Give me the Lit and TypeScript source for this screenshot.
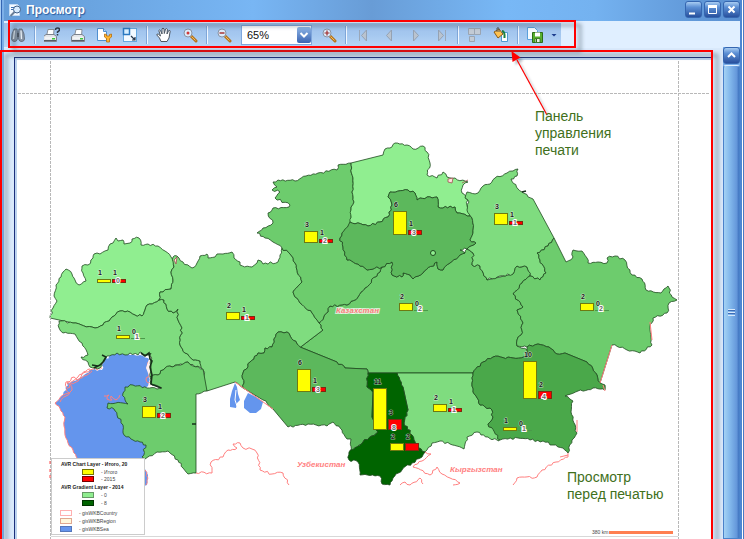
import { LitElement, css, html, svg, nothing } from "lit";
import { customElement } from "lit/decorators.js";

type Pt = [number, number];

// Parses "x,y x,y ..." and adds small deterministic kinks so borders look surveyed.
function border(points: string, closed = true): string {
  const pts = points.trim().split(/\s+/).map((p) => p.split(",").map(Number) as Pt);
  if (closed) pts.push(pts[0]);
  let d = `M${pts[0][0]} ${pts[0][1]}`;
  for (let i = 1; i < pts.length; i++) {
    const a = pts[i - 1];
    const b = pts[i];
    const flip = a[0] > b[0] || (a[0] === b[0] && a[1] > b[1]);
    const [s, e] = flip ? [b, a] : [a, b];
    const len = Math.hypot(e[0] - s[0], e[1] - s[1]);
    if (len > 4 && len < 22) {
      const n = Math.max(2, Math.round(len / 2.6));
      const mids: string[] = [];
      for (let k = 1; k < n; k++) {
        const h = Math.sin(s[0] * 12.9 + s[1] * 78.2 + e[0] * 37.7 + k * 51.3) * 43758.5;
        const off = (h - Math.floor(h) - 0.5) * 2.4;
        const x = s[0] + ((e[0] - s[0]) * k) / n - ((e[1] - s[1]) / len) * off;
        const y = s[1] + ((e[1] - s[1]) * k) / n + ((e[0] - s[0]) / len) * off;
        mids.push(`L${x.toFixed(1)} ${y.toFixed(1)}`);
      }
      d += (flip ? mids.reverse() : mids).join("");
    }
    d += `L${b[0]} ${b[1]}`;
  }
  return d + (closed ? "Z" : "");
}

const SHADES = ["#90ee90", "#7fdc7f", "#6dcc6d", "#5cb85c", "#4aa84a", "#006400"];

const SEA = "102,370 90,370 84,375 77,380 67,383 66,390 63,395 55,403 61,411 65,417 64,426 65,435 68,443 73,450 78,459 142,459 150,440 140,400 150,383 149,374 150,360 140,355 128,354 117,353 103,360";

const REGIONS: [number, string][] = [
  [2, "319,323 328,312 330,306 347,305 358,297 365,288 380,272 382,267 392,262 392,275 402,277 403,273 410,275 413,279 423,273 437,262 438,269 443,270 450,263 465,253 467,249 473,253 472,265 480,266 487,280 513,274 517,266 527,267 530,276 522,283 513,294 523,307 517,310 523,323 521,335 517,340 517,346 527,350 527,357 513,358 493,357 483,362 473,373 368,373 367,369 345,368 337,362 300,347 298,349 323,330"],
  [0, "50,318 53,308 57,301 54,296 56,285 61,277 63,272 66,269 72,274 75,280 79,285 86,281 83,273 82,266 88,265 93,258 94,254 100,254 108,250 110,244 113,243 116,238 118,241 123,240 124,244 130,243 132,239 139,238 141,245 148,244 158,246 165,251 171,257 173,260 174,267 171,272 173,280 171,289 160,292 159,300 147,305 145,310 142,316 135,315 130,312 120,311 112,317 103,325 95,328 92,327 73,323"],
  [1, "59,321 73,323 92,327 95,328 103,325 112,317 120,311 130,312 135,315 142,316 145,310 147,305 159,300 164,300 167,309 173,313 178,309 178,320 182,328 180,345 185,353 193,360 200,361 203,368 195,367 188,362 178,365 165,368 158,375 150,377 151,366 151,353 146,355 140,352 138,355 130,353 125,355 117,353 107,356 102,363 100,368 90,367 88,362 81,357 88,355 82,343 75,334 63,333 59,328"],
  [1, "173,257 177,256 183,262 192,268 197,263 200,256 207,254 208,258 215,257 217,254 223,254 232,252 234,258 240,262 240,265 252,267 257,263 258,260 263,264 278,262 280,255 282,248 290,254 295,263 302,282 293,292 300,303 312,313 319,323 323,330 298,349 297,344 287,332 278,332 272,347 265,348 264,353 258,353 250,362 243,373 243,388 235,382 207,391 203,370 200,361 193,360 185,353 180,345 182,328 178,320 178,309 173,313 167,309 164,300 159,300 160,292 171,289 173,280 171,272 174,267"],
  [2, "150,377 158,375 165,368 177,365 188,362 193,366 203,369 207,391 196,394 196,473 188,474 183,468 178,460 168,451 157,452 145,459 142,457 146,445 140,442 133,440 123,433 123,425 117,415 114,409 107,408 108,403 128,404 125,400 123,393 125,387 133,385 147,388 162,388 155,385 150,383"],
  [2, "351,163 338,165 337,170 318,173 306,176 295,181 278,180 273,182 277,187 272,190 280,192 275,198 290,205 289,207 273,208 268,213 273,223 263,228 257,233 265,238 273,242 282,248 290,254 295,263 302,282 293,292 300,303 312,313 319,323 328,312 330,306 347,305 358,297 365,288 380,272 382,267 367,270 358,264 347,260 343,247 340,238 350,223 351,210 354,202 352,192 353,178"],
  [0, "351,163 383,155 385,149 390,148 395,143 407,145 413,149 423,146 427,152 430,163 427,175 437,178 443,172 447,177 455,178 468,182 463,185 462,193 468,200 467,205 470,216 457,213 455,207 438,207 437,197 420,198 417,200 415,193 408,190 390,192 388,197 392,205 388,217 380,222 368,226 350,222 351,210 354,202 352,192 353,178"],
  [3, "350,222 368,226 380,222 388,217 392,205 388,197 390,192 408,190 415,193 417,200 420,198 437,197 438,207 455,207 457,213 470,216 472,218 473,233 470,240 476,243 467,249 460,250 465,253 450,263 443,270 438,269 437,262 423,273 413,279 410,275 403,273 402,277 392,275 392,262 382,267 367,270 358,264 347,260 343,247 340,238"],
  [1, "467,192 478,193 483,186 490,184 495,178 507,173 513,171 518,169 517,176 511,179 522,192 533,199 554,238 548,246 537,253 540,260 546,273 540,280 530,276 527,267 517,266 513,274 500,276 487,280 480,266 472,265 473,253 467,249 476,243 470,240 473,233 472,218 467,210 469,202 465,198"],
  [2, "554,238 566,262 573,257 573,250 582,251 587,258 588,263 598,262 607,263 607,258 615,256 625,260 632,275 642,279 646,290 661,293 668,286 672,297 677,300 669,303 667,313 653,318 650,327 652,345 640,353 627,350 612,345 600,383 597,375 587,362 565,353 557,354 549,347 538,344 527,347 517,346 517,340 521,335 523,323 517,310 523,307 513,294 522,283 530,276 540,280 546,273 540,260 537,253 548,246"],
  [3, "300,347 337,362 345,368 367,369 368,373 367,387 373,392 372,417 378,432 363,442 351,452 351,439 347,439 342,430 333,422 327,426 308,424 288,427 273,409 263,400 243,388 243,373 250,362 258,353 264,353 265,348 272,347 278,332 287,332 297,344"],
  [1, "397,373 473,373 472,383 473,392 480,405 492,410 493,417 488,424 500,438 499,441 488,437 477,432 467,437 464,449 450,444 440,441 432,443 425,452 415,445 412,435 404,423 408,410 403,387"],
  [5, "368,373 397,373 403,387 408,410 404,423 412,435 415,445 425,452 422,457 412,463 402,470 393,478 390,485 382,484 380,476 360,475 358,462 349,460 349,452 363,442 378,432 372,417 373,392 367,387"],
  [4, "473,373 483,362 493,357 513,358 527,357 527,350 527,347 538,344 549,347 557,354 565,353 587,362 597,375 600,383 605,385 605,390 593,388 578,391 565,396 573,401 571,412 577,433 572,440 568,453 563,448 553,445 543,441 530,440 518,438 500,440 488,424 493,417 492,410 480,405 473,392 472,383"],
];

const NEIGHBOURS = [
  "196,473 212,473 211,462 223,457 228,450 237,448 233,444 240,443 243,448 252,449 257,453 260,470 272,474 283,473 289,485",
  "425,452 431,454 422,461 413,467 430,475 437,467 442,474 450,478 460,483 453,485",
  "400,485 405,482 410,485 420,478 423,484",
  "513,485 517,478 537,477 542,470 556,462 568,457 568,453",
  "235,382 273,409",
];

const COAST = [
  "102,368 90,370 86,372 77,380 74,377 67,383 70,387 66,390 69,393 63,395 55,403 61,411 65,417 64,426 65,435 68,443 73,450 78,459",
  "92,371 84,376 76,382 70,384 72,390 66,396 60,402",
  "90,369 82,374 78,377 73,381 66,382 67,388",
  "104,396 109,395 107,399 112,400 111,396 116,400 120,395",
  "150,360 147,368 149,374 146,380 152,385",
  "145,470 148,478 146,485",
];

interface Chart { x: number; base: number; total: number; year: number; labels: [string, string, string]; }

const CHARTS: Chart[] = [
  { x: 97, base: 282, total: 3, year: 3, labels: ["1", "1", "0"] },
  { x: 116, base: 338, total: 3, year: 0, labels: ["1", "0", "1"] },
  { x: 226, base: 319, total: 7, year: 3, labels: ["2", "1", "1"] },
  { x: 142, base: 417, total: 11, year: 4, labels: ["3", "1", "2"] },
  { x: 304, base: 242, total: 11, year: 3, labels: ["3", "1", "2"] },
  { x: 393, base: 234, total: 23, year: 4, labels: ["6", "1", "3"] },
  { x: 494, base: 224, total: 11, year: 3, labels: ["3", "1", "1"] },
  { x: 399, base: 310, total: 7, year: 0, labels: ["2", "0", "2"] },
  { x: 580, base: 310, total: 7, year: 0, labels: ["2", "0", "2"] },
  { x: 297, base: 391, total: 22, year: 4, labels: ["6", "1", "3"] },
  { x: 373, base: 429, total: 41, year: 10, labels: ["11", "3", "8"] },
  { x: 390, base: 450, total: 7, year: 7, labels: ["2", "2", ""] },
  { x: 433, base: 411, total: 7, year: 3, labels: ["2", "1", "1"] },
  { x: 523, base: 398, total: 37, year: 7, labels: ["10", "2", "4"] },
  { x: 503, base: 430, total: 3, year: 0, labels: ["1", "0", "1"] },
];

const LEGEND: { y: number; x: number; swatch: string; edge: string; label: string; lx: number }[] = [
  { y: 469, x: 82, swatch: "#ffff00", edge: "#777700", label: "- Итого", lx: 101 },
  { y: 476, x: 82, swatch: "#ff0000", edge: "#770000", label: "- 2015", lx: 101 },
  { y: 492, x: 82, swatch: "#90ee90", edge: "#669966", label: "- 0", lx: 101 },
  { y: 500, x: 82, swatch: "#006400", edge: "#003300", label: "- 8", lx: 101 },
  { y: 510, x: 60, swatch: "#ffffff", edge: "#ffb0b0", label: "- gisWKBCountry", lx: 79 },
  { y: 518, x: 60, swatch: "#fff8dc", edge: "#e0a890", label: "- gisWKBRegion", lx: 79 },
  { y: 526, x: 60, swatch: "#6495ed", edge: "#5577bb", label: "- gisWKBSea", lx: 79 },
];

@customElement("coverage-map")
export class CoverageMap extends LitElement {
  static styles = css`
    :host { display: block; }
    .map { display: block; width: 100%; height: auto; font-family: "Liberation Sans", Arial, sans-serif; }
    .region { stroke: #1f4a1f; stroke-width: 1; stroke-opacity: 0.8; stroke-linejoin: round; }
    .sea { fill: #6495ed; }
    .pink, .coast { fill: none; stroke: #ff8080; stroke-width: 1; }
    .guide { fill: none; stroke: #b8b8b8; stroke-width: 1; stroke-dasharray: 3 1; }
    .num { font-size: 7px; font-weight: bold; fill: #202020; paint-order: stroke; stroke: #ffffff; stroke-opacity: 0.6; stroke-width: 1; }
    .sub { fill: #666666; stroke-opacity: 1; stroke-width: 2; }
    .country { font-size: 8px; font-weight: bold; font-style: italic; fill: #ff7f7f; }
    .halo { paint-order: stroke; stroke: #ffffff; stroke-width: 2; stroke-opacity: 0.7; }
    .legend { font-size: 5px; fill: #444444; }
    .strong { font-weight: bold; fill: #222222; }
  `;

  private chart(c: Chart) {
    return svg`
      <rect x=${c.x + 0.5} y=${c.base - c.total + 0.5} width="13" height=${c.total} fill="#ffff00" stroke="#6e7a10"/>
      ${c.year
        ? svg`<rect x=${c.x + 15.5} y=${c.base - c.year + 0.5} width="13" height=${c.year} fill="#ff0000" stroke="#7d2a10"/>`
        : svg`<path d=${`M${c.x + 15} ${c.base + 0.5}h14`} stroke="#4a9a4a" stroke-width="1"/>`}
      <text class="num" x=${c.x + 1} y=${c.base - c.total - 4}>${c.labels[0]}</text>
      <text class="num" x=${c.x + 16} y=${c.base - c.year - 4}>${c.labels[1]}</text>
      <text class="num sub" x=${c.x + 19} y=${c.base + 1}>${c.labels[2]}</text>`;
  }

  render() {
    return html`
      <svg class="map" viewBox="17 60 693 490" role="img" aria-label="Карта Казахстана">
        <path class="sea" d=${border(SEA)} />
        <path class="sea" d="M145 469 148 475 147 485 144 486Z" />
        ${COAST.map((c) => svg`<path class="coast" d=${border(c, false)}/>`)}
        <path d="M150 356 146 368 150 378 148 386 153 386 152 356Z" fill="#fff0f0" />
        <path class="sea" d="M235 383 237 387 238 394 240 400 237 403 236 408 230 407 230 399 232 391ZM248 393 256 397 263 402 261 409 256 413 250 413 244 408 244 401Z" />
        <path d="M236 390 235 400 237 406" stroke="#fff" fill="none" />
        ${REGIONS.map(([shade, pts]) => svg`<path class="region" fill=${SHADES[shade]} d=${border(pts)}/>`)}
        ${NEIGHBOURS.map((n) => svg`<path class="pink" d=${border(n, false)}/>`)}
        <path d="M141 353 145 356 149 353 150 359 152 361 150 367 152 375 151 384 156 386 161 388M102 355 106 357 103 362 100 365 94 368M92 365 98 366 M196 424H192M522 192 526 191" fill="none" stroke="#16301a" stroke-width="1.6" />
        <circle cx="433" cy="253" r="2.5" fill="#90ee90" stroke="#1f4a1f" />
        <path d="M174 260 177 257 176 264Z M448 179 453 178 452 183 448 182Z M462 183 468 180" fill="#ffdede" stroke="#a05050" stroke-width="0.8" />
        <path d="M612 345 600 383M650 322 652 340M603 385 605 391M577 420V432M568 455 560 457" class="pink" />

        <text class="country halo" x="336" y="313">Казахстан</text>
        <text class="country" x="297" y="467">Узбекистан</text>
        <text class="country" x="450" y="472">Кыргызстан</text>
        ${CHARTS.map((c) => this.chart(c))}

        <path class="guide" d="M18 93.5H710" />
        <path class="guide" d="M50.5 61V550M678.5 61V550" />
        <path d="M51 536.5H678" stroke="#d8d8d8" />
        <path d="M50 461v3M50 469v3M50 475v3" stroke="#ff5050" />

        <rect x="51.5" y="458.5" width="93" height="76" fill="#ffffff" stroke="#cccccc" />
        <text class="legend strong" x="61" y="466">AVR Chart Layer - Итого, 20</text>
        <text class="legend strong" x="61" y="489">AVR Gradient Layer - 2014</text>
        ${LEGEND.map((l) => svg`
          <rect x=${l.x + 0.5} y=${l.y + 0.5} width="11" height="5" fill=${l.swatch} stroke=${l.edge}/>
          <text class="legend" x=${l.lx} y=${l.y + 5}>${l.label}</text>`)}

        <text class="legend" x="592" y="534">380 km</text>
        <path d="M609 532.5H673" stroke="#ff7f50" stroke-width="3" />
      </svg>`;
  }
}

const printer = svg`
  <path d="M4.500 8 6 1.500h6L11.500 8Z" fill="#fff" stroke="#8a9099"/>
  <path d="M1.500 8.500 4 6.500h8l2.500 2v5h-13Z" fill="#e4e6ea" stroke="#7c828c"/>
  <path d="M2 12.500h12" stroke="#555b66"/><path d="M3 10h10" stroke="#fff"/><rect x="10" y="10" width="3" height="1.500" fill="#3cc83c"/>`;
const lens = svg`<path d="m9 9 5 5" stroke="#b5721c" stroke-width="3" stroke-linecap="round"/><path d="m9.500 9.500 4 4" stroke="#f0c060"/><circle cx="6" cy="6" r="4" fill="#dcecfb" stroke="#8a93a3"/>`;

const ICONS: Record<string, unknown> = {
  find: svg`<path d="M4 2h3l.5 3v7q-1 3-3.500 2.500T1.500 12L2 7ZM12 2H9l-.5 3v7q1 3 3.500 2.500t2.500-2.500L14 7Z" fill="#8794a5" stroke="#5b6675" stroke-width=".8"/><path d="M7 6h2v4H7Z" fill="#4b5563"/><path d="M4.500 3.500 3.500 12M11 3.500 11.500 12" stroke="#e6edf4" stroke-width="1.300"/>`,
  printSetup: svg`<g transform="translate(-2 1)">${printer}</g><path d="M11.500 3q0-2 2-2t2 1.500-2 2.500v1M13.500 7v1.500" fill="none" stroke="#2e3846" stroke-width="1.500"/>`,
  print: svg`<g transform="translate(0 1)">${printer}</g>`,
  pageSetup: svg`<path d="M1.500 1.500h6l3 3v9h-9Z" fill="#fff" stroke="#4f8fd0"/><path d="M7.500 1.500v3h3" fill="#b9dcfa" stroke="#4f8fd0"/><path d="M8.500 7v3l2 1.500V15h3v-3.500l2-1.500V7l-2 .5V9h-3V7.500Z" fill="#ffb52e" stroke="#b86e10" stroke-width=".8"/>`,
  scale: svg`<rect x="1.500" y="1.500" width="13" height="13" fill="#f4faff" stroke="#65a8e0"/><rect x="1.500" y="1.500" width="6" height="6" fill="#d8efff" stroke="#2a78c0" stroke-width="1.500"/><path d="m9 9 4 4m0-3v3h-3" fill="none" stroke="#28384c" stroke-width="1.200"/>`,
  hand: svg`<path d="M5 14.500 3.500 11 .8 8q0-1.500 1.500-.9L4.500 9 2.800 3.500q.8-1.200 1.700 0L6 7 6 1.800q1-1.300 2 0L8.300 6.500 9.500 2q1.200-1 1.900.3L11 7l1.700-3.500q1.400-.5 1.500.7L13 11l-2 3.500Z" fill="#fff" stroke="#4d5661"/>`,
  zoom: svg`${lens}<circle cx="6" cy="6" r="1.500" fill="#d03838"/>`,
  zoomOut: svg`${lens}<path d="M3.500 6h5" stroke="#a83434" stroke-width="1.500"/>`,
  zoomIn: svg`${lens}<path d="M3.500 6h5M6 3.500v5" stroke="#a02828" stroke-width="1.200"/>`,
  first: svg`<path d="M4.500 3v11" stroke="#9aa7b8"/><path d="M11.500 3v11l-5-5.500Z" fill="#b9c3cf" stroke="#95a2b3"/>`,
  prev: svg`<path d="M10.500 3v11l-5-5.500Z" fill="#b9c3cf" stroke="#95a2b3"/>`,
  next: svg`<path d="M6.500 3v11l5-5.500Z" fill="#b9c3cf" stroke="#95a2b3"/>`,
  last: svg`<path d="M12.500 3v11" stroke="#9aa7b8"/><path d="M5.500 3v11l5-5.500Z" fill="#b9c3cf" stroke="#95a2b3"/>`,
  multi: svg`<path d="M1.500 1.500h6v6h-6ZM7.500 1.500h6v6h-6ZM2.500 9.500h5v5h-5Z" fill="#c3cbd5" stroke="#9aa5b3"/>`,
  fill: svg`<path d="M8.500 5.500h6v9h-6Z" fill="#fff" stroke="#4f9ad0"/><path d="m1 5 5-3 4 5-5 4Z" fill="#ffc250" stroke="#8a5a14"/><path d="M4 5V1q2-1 2 1v3" fill="none" stroke="#555"/><path d="M9 4q3 0 2.500 7" fill="none" stroke="#1c8040" stroke-width="2"/>`,
  save: svg`<path d="M.5.500h7l3 3v9H.5Z" fill="#f5fbff" stroke="#59a0dc"/><path d="M5.500 5.500h10v10h-10Z" fill="#57b02e" stroke="#2c6d18"/><path d="M8 5.500h5v4H8Z" fill="#fff"/><path d="M8 11.500h5v4H8Z" fill="#e6f2de" stroke="#2c6d18" stroke-width=".8"/><path d="M9.500 12v3" stroke="#2c6d18"/>`,
};

type Tool = { icon: string; label: string; off?: boolean } | "|" | "scale";

const TOOLS: Tool[] = [
  { icon: "find", label: "Найти" }, "|",
  { icon: "printSetup", label: "Печать с настройкой" },
  { icon: "print", label: "Печать" },
  { icon: "pageSetup", label: "Параметры страницы" },
  { icon: "scale", label: "Масштаб" }, "|",
  { icon: "hand", label: "Рука" },
  { icon: "zoom", label: "Лупа" }, "|",
  { icon: "zoomOut", label: "Уменьшить" },
  "scale",
  { icon: "zoomIn", label: "Увеличить" }, "|",
  { icon: "first", label: "Первая страница", off: true },
  { icon: "prev", label: "Предыдущая страница", off: true },
  { icon: "next", label: "Следующая страница", off: true },
  { icon: "last", label: "Последняя страница", off: true }, "|",
  { icon: "multi", label: "Несколько страниц", off: true },
  { icon: "fill", label: "Цвет фона" }, "|",
  { icon: "save", label: "Экспорт" },
];

@customElement("app-root")
export class AppRoot extends LitElement {
  static styles = css`
    :host { display: block; height: 100vh; overflow: hidden; font-family: "Liberation Sans", Arial, sans-serif; }
    * { box-sizing: border-box; }
    button { padding: 0; border: 0; background: none; font: inherit; }
    .window { position: relative; display: flex; flex-direction: column; height: 100%; overflow: hidden; background: #e0efff; }
    .title { display: flex; flex: none; align-items: center; height: 21px; padding: 0 4px 2px 8px;
      background: linear-gradient(90deg, #649cd8 0%, #6aa4e0 12%, #78b6f4 34%, #689cd6 50%, #78b8f6 68%, #74b2f0 80%, #5f96d6 95%, #5a90d2 100%); }
    .title-icon { width: 14px; height: 16px; margin-right: 4px; }
    .title-text { flex: 1; margin: 0; font-size: 12px; line-height: 16px; font-weight: bold; color: #ffffff; text-shadow: 1px 1px 1px #2a5a9c; }
    .controls { display: flex; gap: 2px; }
    .control, .scroll-up { display: block; width: 17px; height: 17px; border: 1px solid #3566b0; border-radius: 3px;
      background: linear-gradient(#a8ccf2 0%, #5b8fd4 35%, #28509e 100%); }
    .glyph { display: block; width: 100%; height: 100%; }
    .bar { flex: none; display: flex; height: 27px; padding: 2px 4px 1px; }
    .tools { display: flex; align-items: center; height: 24px; padding: 0 1px;
      background: linear-gradient(#9dbfe9, #a5c8f0 50%, #b8d6f6); }
    .tool { display: flex; align-items: center; justify-content: center; width: 26px; height: 22px; }
    .icon { display: block; width: 16px; height: 16px; }
    .sep { width: 8px; height: 18px; display: flex; justify-content: center; }
    .sep-line { width: 2px; border-left: 1px solid #7fa6d8; background: #f0f7ff; }
    .more { width: 12px; height: 22px; display: flex; align-items: center; justify-content: center; }
    .caret { width: 6px; height: 3px; background: #1c3c8c; clip-path: polygon(0 0, 100% 0, 50% 100%); }
    .combo { display: grid; width: 71px; height: 20px; margin: 0 4px; }
    .combo-field, .combo-arrow { grid-area: 1 / 1; }
    .combo-field { appearance: none; width: 100%; height: 20px; border: 1px solid #7fa6dc; border-radius: 0; background: #ffffff; color: #101010;
      padding: 0 18px 0 5px; font: 11px/18px "Liberation Sans", Arial, sans-serif; }
    .combo-arrow { justify-self: end; align-self: center; width: 14px; height: 16px; margin-right: 1px; border-radius: 2px; pointer-events: none;
      background: linear-gradient(#8fb6e6, #3a64b2); }
    .preview { flex: 1; min-height: 0; display: flex; gap: 12px; padding: 9px 4px 0 14px; background: #d9e9fb; }
    .sheet { flex: 1; min-width: 0; overflow: hidden; background: #ffffff; border-top: 1px solid #1c2f7c; border-left: 1px solid #1c2f7c;
      padding: 2px 1px 0 2px; box-shadow: inset 2px 2px 0 #bcd3ee; }
    .scroll { flex: none; width: 17px; display: flex; flex-direction: column; margin-top: -10px; background: #79aee8; }
    .scroll-up { flex: none; }
    .thumb { flex: 1; margin-top: 1px; border: 1px solid #4a82ca; border-top-color: #e0f0ff; border-radius: 3px 3px 0 0;
      background: linear-gradient(90deg, #a4d2f4, #82b8ec 40%, #6497da 85%, #3f74c0); }
    .grip { display: block; width: 7px; height: 7px; margin: 243px auto 0; background: repeating-linear-gradient(#d6e8fb 0 1px, #3d6cb8 1px 2px, transparent 2px 3px); }
    .edge-left, .edge-right { position: absolute; top: 0; bottom: 0; }
    .edge-left { left: 0; width: 4px; background: linear-gradient(90deg, #a8cdf4 0 1px, #3566b4 1px 2px, #7eb0e8 2px 4px); }
    .edge-right { right: 0; width: 4px; background: linear-gradient(90deg, #4f86d2 0 2px, #ffffff 2px 3px, #4a7ac4 3px 4px); }
    .marks { position: absolute; inset: 0; overflow: hidden; pointer-events: none; }
    .mark { position: absolute; border: 2px solid #ff0000; filter: drop-shadow(5px 4px 2px rgba(50, 70, 80, 0.6)); }
    .mark-tools { left: 8px; top: 20px; width: 568px; height: 28px; }
    .mark-page { left: 0; right: 31px; top: 50px; bottom: -12px; }
    .arrow { position: absolute; left: 500px; top: 44px; width: 60px; height: 80px; filter: drop-shadow(3px 3px 1px rgba(40, 60, 80, 0.3)); }
    .note { position: absolute; margin: 0; font-size: 14px; line-height: 17px; color: #41701c; }
    .note-tools { left: 535px; top: 108px; width: 90px; }
    .note-page { left: 567px; top: 469px; white-space: nowrap; }
  `;

  private tool(t: Tool) {
    if (t === "|") return html`<span class="sep"><span class="sep-line"></span></span>`;
    if (t === "scale") {
      return html`<span class="combo">
        <select class="combo-field" aria-label="Масштаб просмотра"><option>65%</option></select>
        <svg class="combo-arrow" viewBox="0 0 14 16"><path d="m3.500 6 3.500 3.500L10.500 6" fill="none" stroke="#fff" stroke-width="2"/></svg>
      </span>`;
    }
    return html`<button class="tool" aria-label=${t.label} ?disabled=${t.off ?? false}>
      <svg class="icon" viewBox="0 0 16 16">${ICONS[t.icon] ?? nothing}</svg>
    </button>`;
  }

  render() {
    return html`
      <div class="window">
        <header class="title">
          <svg class="title-icon" viewBox="0 0 14 16">
            <path d="M1.500 2.500h8l2 2v9h-10Z" fill="#f4f9ff" stroke="#c4dcf6" />
            <path d="M3 5.500h3M3 7.500h2" stroke="#3c6fb4" />
            <path d="m2.500 14 4-4" stroke="#6b7f98" stroke-width="2" />
            <circle cx="9" cy="7.500" r="3.500" fill="#d8ecff" stroke="#3f5f88" />
          </svg>
          <h1 class="title-text">Просмотр</h1>
          <div class="controls">
            <button class="control" aria-label="Свернуть"><svg class="glyph" viewBox="0 0 15 15"><path d="M3 11.500h6" stroke="#fff" stroke-width="2" /></svg></button>
            <button class="control" aria-label="Развернуть"><svg class="glyph" viewBox="0 0 15 15"><path d="M3.500 4v7.500h8V4" fill="none" stroke="#fff" /><path d="M3 4.500h9" stroke="#fff" stroke-width="3" /></svg></button>
            <button class="control" aria-label="Закрыть"><svg class="glyph" viewBox="0 0 15 15"><path d="m4.500 4.500 6 6m0-6-6 6" stroke="#fff" stroke-width="2" /></svg></button>
          </div>
        </header>

        <div class="bar">
          <div class="tools" role="toolbar" aria-label="Панель управления печати">
            ${TOOLS.map((t) => this.tool(t))}
            <button class="more" aria-label="Форматы экспорта"><span class="caret"></span></button>
          </div>
        </div>

        <main class="preview">
          <div class="sheet"><coverage-map></coverage-map></div>
          <div class="scroll">
            <button class="scroll-up" aria-label="Прокрутить вверх"><svg class="glyph" viewBox="0 0 15 15"><path d="m4 9 3.500-3.500L11 9" fill="none" stroke="#fff" stroke-width="2" /></svg></button>
            <div class="thumb"><span class="grip"></span></div>
          </div>
        </main>

        <div class="edge-left"></div>
        <div class="edge-right"></div>

        <div class="marks">
          <div class="mark mark-page"></div>
          <div class="mark mark-tools"></div>
          <svg class="arrow" viewBox="0 0 60 80">
            <path d="M47 71 17 16" stroke="#ff0000" stroke-width="1.200" />
            <path d="M11.500 7 20.500 13.500 12.500 18Z" fill="#ff0000" />
          </svg>
          <p class="note note-tools">Панель управления печати</p>
          <p class="note note-page">Просмотр<br />перед печатью</p>
        </div>
      </div>`;
  }
}
